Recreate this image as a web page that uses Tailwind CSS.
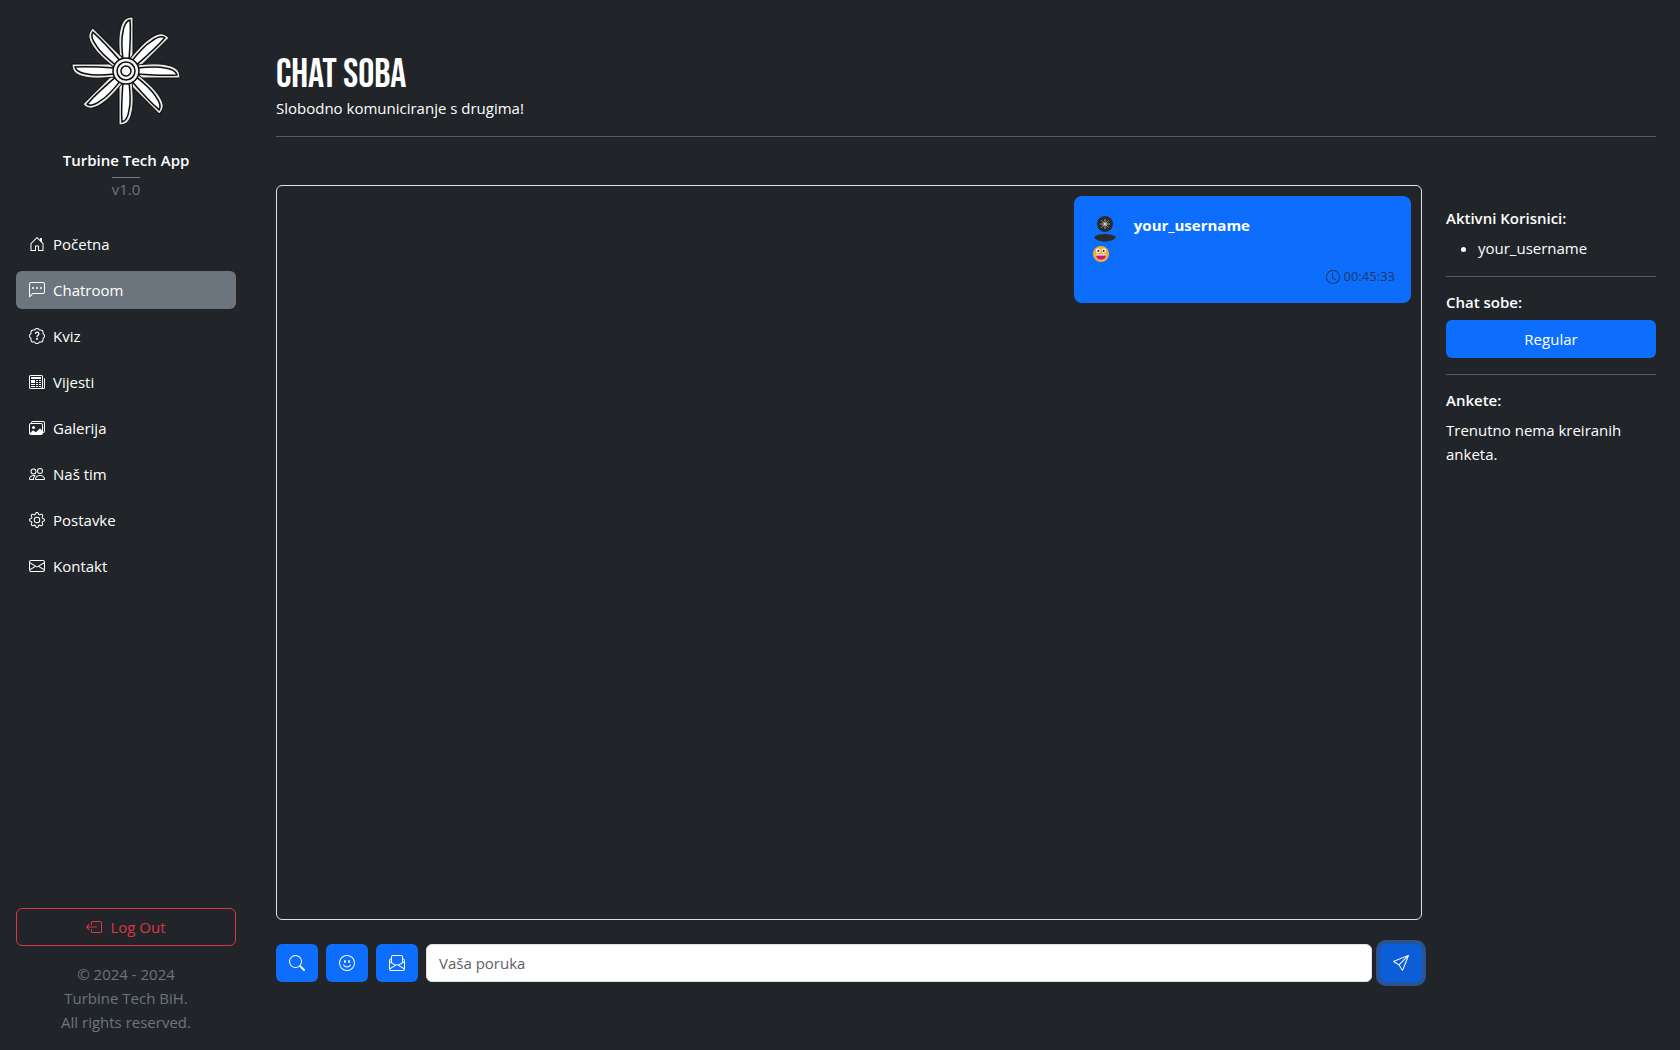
<!DOCTYPE html>
<html lang="bs">
<head>
    <meta charset="UTF-8">
    <meta name="viewport" content="width=device-width, initial-scale=1.0">
    <title>Turbine Tech App - Chat soba</title>
    <script src="https://cdn.jsdelivr.net/npm/@tailwindcss/browser@4"></script>
</head>
<body class="bg-[#212529] text-white text-[15px] leading-6 font-['Segoe_UI','Open_Sans',sans-serif]">

    <div class="flex min-h-screen">

        <!-- Bočni meni -->
        <aside class="flex flex-col w-[252px] shrink-0 p-4">
            <div class="flex flex-col items-center text-center">
                <svg class="w-[110px] h-[110px]" viewBox="-55 -55 110 110" role="img" aria-label="Turbine Tech">
                    <defs>
                        <g id="blade" stroke="#0b0c0d" stroke-linejoin="round">
                            <path fill="#e6e6e4" stroke-width="1" d="M-6-11C-7-20-8-32-6-41C-4-50-1-54 7-54V-11Z"/>
                            <path fill="#fff" stroke-width="1.5" d="M-3-11C-4-20-5-32-3-39C-2-46 0-50 4-51C5-38 4-24 3-11Z"/>
                        </g>
                    </defs>
                    <use href="#blade"/>
                    <use href="#blade" transform="rotate(45)"/>
                    <use href="#blade" transform="rotate(90)"/>
                    <use href="#blade" transform="rotate(135)"/>
                    <use href="#blade" transform="rotate(180)"/>
                    <use href="#blade" transform="rotate(225)"/>
                    <use href="#blade" transform="rotate(270)"/>
                    <use href="#blade" transform="rotate(315)"/>
                    <g fill="#f4f4f2" stroke="#0b0c0d" stroke-width="1.5">
                        <circle r="13"/>
                        <circle r="9"/>
                        <circle r="5"/>
                    </g>
                </svg>
                <strong class="mt-[22px] font-semibold">Turbine Tech App</strong>
                <hr class="w-7 mt-[5px] border-white/40">
                <span class="leading-[22px] text-[#6c757d]">v1.0</span>
            </div>

            <nav class="flex flex-col gap-2 mt-[25px]">
                <a href="#" class="flex items-center gap-2 h-[38px] px-[13px] rounded-md">
                    <svg class="size-4" fill="currentColor" viewBox="0 0 16 16"><path d="M8.354 1.146a.5.5 0 0 0-.708 0l-6 6A.5.5 0 0 0 1.5 7.5v7a.5.5 0 0 0 .5.5h4.5a.5.5 0 0 0 .5-.5v-4h2v4a.5.5 0 0 0 .5.5H14a.5.5 0 0 0 .5-.5v-7a.5.5 0 0 0-.146-.354L13 5.793V2.5a.5.5 0 0 0-.5-.5h-1a.5.5 0 0 0-.5.5v1.293zM2.5 14V7.707l5.5-5.5 5.5 5.5V14H10v-4a.5.5 0 0 0-.5-.5h-3a.5.5 0 0 0-.5.5v4z"/></svg>
                    Početna
                </a>
                <a href="#" class="flex items-center gap-2 h-[38px] px-[13px] rounded-md bg-[#6c757d]" aria-current="page">
                    <svg class="size-4" fill="currentColor" viewBox="0 0 16 16"><path d="M14 1a1 1 0 0 1 1 1v8a1 1 0 0 1-1 1H4.414A2 2 0 0 0 3 11.586l-2 2V2a1 1 0 0 1 1-1zM2 0a2 2 0 0 0-2 2v12.793a.5.5 0 0 0 .854.353l2.853-2.853A1 1 0 0 1 4.414 12H14a2 2 0 0 0 2-2V2a2 2 0 0 0-2-2z"/><path d="M5 6a1 1 0 1 1-2 0 1 1 0 0 1 2 0m4 0a1 1 0 1 1-2 0 1 1 0 0 1 2 0m4 0a1 1 0 1 1-2 0 1 1 0 0 1 2 0"/></svg>
                    Chatroom
                </a>
                <a href="#" class="flex items-center gap-2 h-[38px] px-[13px] rounded-md">
                    <svg class="size-4" fill="currentColor" viewBox="0 0 16 16"><path d="M8.05 9.6c.336 0 .504-.24.554-.627.04-.534.198-.815.847-1.26.673-.475 1.049-1.09 1.049-1.986 0-1.325-.92-2.227-2.262-2.227-1.02 0-1.792.492-2.1 1.29A1.7 1.7 0 0 0 6 5.48c0 .393.203.64.545.64.272 0 .455-.147.564-.51.158-.592.525-.915 1.074-.915.61 0 1.03.446 1.03 1.084 0 .563-.208.885-.822 1.325-.619.433-.926.914-.926 1.64v.111c0 .428.208.745.585.745"/><path d="m10.273 2.513-.921-.944.715-.698.622.637.89-.011a2.89 2.89 0 0 1 2.924 2.924l-.01.89.636.622a2.89 2.89 0 0 1 0 4.134l-.637.622.011.89a2.89 2.89 0 0 1-2.924 2.924l-.89-.01-.622.636a2.89 2.89 0 0 1-4.134 0l-.622-.637-.89.011a2.89 2.89 0 0 1-2.924-2.924l.01-.89-.636-.622a2.89 2.89 0 0 1 0-4.134l.637-.622-.011-.89a2.89 2.89 0 0 1 2.924-2.924l.89.01.622-.636a2.89 2.89 0 0 1 4.134 0l-.715.698a1.89 1.89 0 0 0-2.704 0l-.92.944-1.32-.016a1.89 1.89 0 0 0-1.911 1.912l.016 1.318-.944.921a1.89 1.89 0 0 0 0 2.704l.944.92-.016 1.32a1.89 1.89 0 0 0 1.912 1.911l1.318-.016.921.944a1.89 1.89 0 0 0 2.704 0l.92-.944 1.32.016a1.89 1.89 0 0 0 1.911-1.912l-.016-1.318.944-.921a1.89 1.89 0 0 0 0-2.704l-.944-.92.016-1.32a1.89 1.89 0 0 0-1.912-1.911z"/><path d="M7.001 11a1 1 0 1 1 2 0 1 1 0 0 1-2 0"/></svg>
                    Kviz
                </a>
                <a href="#" class="flex items-center gap-2 h-[38px] px-[13px] rounded-md">
                    <svg class="size-4" fill="currentColor" viewBox="0 0 16 16"><path d="M0 2.5A1.5 1.5 0 0 1 1.5 1h11A1.5 1.5 0 0 1 14 2.5v10.528c0 .3-.05.654-.238.972h.738a.5.5 0 0 0 .5-.5v-9a.5.5 0 0 1 1 0v9a1.5 1.5 0 0 1-1.5 1.5H1.497A1.497 1.497 0 0 1 0 13.5zM12 14c.37 0 .654-.211.853-.441.092-.106.147-.279.147-.531V2.5a.5.5 0 0 0-.5-.5h-11a.5.5 0 0 0-.5.5v11c0 .278.223.5.497.5z"/><path d="M2 3h10v2H2zm0 3h4v3H2zm0 4h4v1H2zm0 2h4v1H2zm5-6h2v1H7zm3 0h2v1h-2zM7 8h2v1H7zm3 0h2v1h-2zm-3 2h2v1H7zm3 0h2v1h-2zm-3 2h2v1H7zm3 0h2v1h-2z"/></svg>
                    Vijesti
                </a>
                <a href="#" class="flex items-center gap-2 h-[38px] px-[13px] rounded-md">
                    <svg class="size-4" fill="currentColor" viewBox="0 0 16 16"><path d="M4.502 9a1.5 1.5 0 1 0 0-3 1.5 1.5 0 0 0 0 3"/><path d="M14.002 13a2 2 0 0 1-2 2h-10a2 2 0 0 1-2-2V5A2 2 0 0 1 2 3a2 2 0 0 1 2-2h10a2 2 0 0 1 2 2v8a2 2 0 0 1-1.998 2M14 2H4a1 1 0 0 0-1 1h9.002a2 2 0 0 1 2 2v7A1 1 0 0 0 15 11V3a1 1 0 0 0-1-1M2.002 4a1 1 0 0 0-1 1v8l2.646-2.354a.5.5 0 0 1 .63-.062l2.66 1.773 3.71-3.71a.5.5 0 0 1 .577-.094l1.777 1.947V5a1 1 0 0 0-1-1z"/></svg>
                    Galerija
                </a>
                <a href="#" class="flex items-center gap-2 h-[38px] px-[13px] rounded-md">
                    <svg class="size-4" fill="currentColor" viewBox="0 0 16 16"><path d="M15 14s1 0 1-1-1-4-5-4-5 3-5 4 1 1 1 1zm-7.978-1L7 12.996c.001-.264.167-1.03.76-1.72C8.312 10.629 9.282 10 11 10c1.717 0 2.687.63 3.24 1.276.593.69.758 1.457.76 1.72l-.008.002-.014.002zM11 7a2 2 0 1 0 0-4 2 2 0 0 0 0 4m3-2a3 3 0 1 1-6 0 3 3 0 0 1 6 0M6.936 9.28a6 6 0 0 0-1.23-.247A7 7 0 0 0 5 9c-4 0-5 3-5 4q0 1 1 1h4.216A2.24 2.24 0 0 1 5 13c0-1.01.377-2.042 1.09-2.904.243-.294.526-.569.846-.816M4.92 10A5.5 5.5 0 0 0 4 13H1c0-.26.164-1.03.76-1.724.545-.636 1.492-1.256 3.16-1.275ZM1.5 5.5a3 3 0 1 1 6 0 3 3 0 0 1-6 0m3-2a2 2 0 1 0 0 4 2 2 0 0 0 0-4"/></svg>
                    Naš tim
                </a>
                <a href="#" class="flex items-center gap-2 h-[38px] px-[13px] rounded-md">
                    <svg class="size-4" fill="currentColor" viewBox="0 0 16 16"><path d="M8 4.754a3.246 3.246 0 1 0 0 6.492 3.246 3.246 0 0 0 0-6.492M5.754 8a2.246 2.246 0 1 1 4.492 0 2.246 2.246 0 0 1-4.492 0"/><path d="M9.796 1.343c-.527-1.79-3.065-1.79-3.592 0l-.094.319a.873.873 0 0 1-1.255.52l-.292-.16c-1.64-.892-3.433.902-2.54 2.541l.159.292a.873.873 0 0 1-.52 1.255l-.319.094c-1.79.527-1.79 3.065 0 3.592l.319.094a.873.873 0 0 1 .52 1.255l-.16.292c-.892 1.64.901 3.434 2.541 2.54l.292-.159a.873.873 0 0 1 1.255.52l.094.319c.527 1.79 3.065 1.79 3.592 0l.094-.319a.873.873 0 0 1 1.255-.52l.292.16c1.64.893 3.434-.902 2.54-2.541l-.159-.292a.873.873 0 0 1 .52-1.255l.319-.094c1.79-.527 1.79-3.065 0-3.592l-.319-.094a.873.873 0 0 1-.52-1.255l.16-.292c.893-1.64-.902-3.433-2.541-2.54l-.292.159a.873.873 0 0 1-1.255-.52zm-2.633.283c.246-.835 1.428-.835 1.674 0l.094.319a1.873 1.873 0 0 0 2.693 1.115l.291-.16c.764-.415 1.6.42 1.184 1.185l-.159.292a1.873 1.873 0 0 0 1.116 2.692l.318.094c.835.246.835 1.428 0 1.674l-.319.094a1.873 1.873 0 0 0-1.115 2.693l.16.291c.415.764-.42 1.6-1.185 1.184l-.291-.159a1.873 1.873 0 0 0-2.693 1.116l-.094.318c-.246.835-1.428.835-1.674 0l-.094-.319a1.873 1.873 0 0 0-2.692-1.115l-.292.16c-.764.415-1.6-.42-1.184-1.185l.159-.291A1.873 1.873 0 0 0 1.945 8.93l-.319-.094c-.835-.246-.835-1.428 0-1.674l.319-.094A1.873 1.873 0 0 0 3.06 4.377l-.16-.292c-.415-.764.42-1.6 1.185-1.184l.292.159a1.873 1.873 0 0 0 2.692-1.115z"/></svg>
                    Postavke
                </a>
                <a href="#" class="flex items-center gap-2 h-[38px] px-[13px] rounded-md">
                    <svg class="size-4" fill="currentColor" viewBox="0 0 16 16"><path d="M0 4a2 2 0 0 1 2-2h12a2 2 0 0 1 2 2v8a2 2 0 0 1-2 2H2a2 2 0 0 1-2-2zm2-1a1 1 0 0 0-1 1v.217l7 4.2 7-4.2V4a1 1 0 0 0-1-1zm13 2.383-4.708 2.825L15 11.105zm-.034 6.876-5.64-3.471L8 9.583l-1.326-.795-5.64 3.47A1 1 0 0 0 2 13h12a1 1 0 0 0 .966-.741M1 11.105l4.708-2.897L1 5.383z"/></svg>
                    Kontakt
                </a>
            </nav>

            <div class="mt-auto">
                <button type="button" class="flex items-center justify-center gap-2 w-full h-[38px] rounded-md border border-[#dc3545] text-[#dc3545]">
                    <svg class="size-4" fill="currentColor" viewBox="0 0 16 16"><path d="M6 12.5a.5.5 0 0 0 .5.5h8a.5.5 0 0 0 .5-.5v-9a.5.5 0 0 0-.5-.5h-8a.5.5 0 0 0-.5.5v2a.5.5 0 0 1-1 0v-2A1.5 1.5 0 0 1 6.5 2h8A1.5 1.5 0 0 1 16 3.5v9a1.5 1.5 0 0 1-1.5 1.5h-8A1.5 1.5 0 0 1 5 12.5v-2a.5.5 0 0 1 1 0z"/><path d="M.146 8.354a.5.5 0 0 1 0-.708l3-3a.5.5 0 1 1 .708.708L1.707 7.5H10.5a.5.5 0 0 1 0 1H1.707l2.147 2.146a.5.5 0 0 1-.708.708z"/></svg>
                    Log Out
                </button>
                <p class="mt-4 text-center text-[#6c757d]">
                    © 2024 - 2024<br>
                    Turbine Tech BiH.<br>
                    All rights reserved.
                </p>
            </div>
        </aside>

        <!-- Glavni sadržaj -->
        <main class="flex-1 min-w-0 px-6 pt-[54px]">
            <header>
                <h1 class="text-[40px] leading-[42px] font-normal font-['Bebas_Neue','Roboto_Condensed','Liberation_Sans_Narrow',sans-serif]">CHAT SOBA</h1>
                <p>Slobodno komuniciranje s drugima!</p>
            </header>
            <hr class="mt-4 border-white/25">

            <div class="grid grid-cols-12 gap-6 mt-12">
                <section class="col-span-10">
                    <!-- Poruke -->
                    <div class="h-[70vh] overflow-y-auto rounded-md border border-[#dee2e6] p-[10px]">
                        <article class="w-[30%] ml-auto min-w-[337px] rounded-lg bg-[#0d6efd] p-4">
                            <div class="flex gap-4">
                                <svg class="w-7 h-[30px]" viewBox="0 0 28 30" role="img" aria-label="Avatar">
                                    <circle cx="15" cy="12" r="8" fill="#2b2b2d"/>
                                    <path d="M15 7v10M10 12h10M11.5 8.5l7 7M18.5 8.5l-7 7" stroke="#a5a5a5" stroke-width="1"/>
                                    <circle cx="15" cy="12" r="1.5" fill="#d0d0d0"/>
                                    <path d="M4 25c4-4 18-4 22 0c-3 6-19 6-22 0Z" fill="#2b2b2d"/>
                                </svg>
                                <strong class="font-bold leading-[26px]">your_username</strong>
                            </div>
                            <div class="flex items-center h-6 px-[3px]">
                                <svg class="size-4" viewBox="0 0 16 16" role="img" aria-label="Nasmijano lice">
                                    <circle cx="8" cy="8" r="8" fill="#fbab2c"/>
                                    <circle cx="5.2" cy="4.8" r="2.3" fill="#fff"/>
                                    <circle cx="10.8" cy="4.8" r="2.3" fill="#fff"/>
                                    <circle cx="5.4" cy="4.9" r="1.1" fill="#333"/>
                                    <circle cx="10.6" cy="4.9" r="1.1" fill="#333"/>
                                    <path d="M3 8.5h10c0 3-2 5-5 5s-5-2-5-5Z" fill="#bb1d80"/>
                                    <path d="M3 8.2h10v1.3H3Z" fill="#fff"/>
                                </svg>
                            </div>
                            <div class="flex items-center justify-end gap-1 text-[13px] leading-[21px] text-[#212529]/75">
                                <svg class="size-[14px]" fill="currentColor" viewBox="0 0 16 16"><path d="M8 3.5a.5.5 0 0 0-1 0V9a.5.5 0 0 0 .252.434l3.5 2a.5.5 0 0 0 .496-.868L8 8.71z"/><path d="M8 16A8 8 0 1 0 8 0a8 8 0 0 0 0 16m7-8A7 7 0 1 1 1 8a7 7 0 0 1 14 0"/></svg>
                                <time>00:45:33</time>
                            </div>
                        </article>
                    </div>

                    <!-- Unos poruke -->
                    <form class="flex gap-2 mt-6">
                        <button type="button" aria-label="Pretraga" class="flex items-center justify-center w-[42px] h-[38px] rounded-md bg-[#0d6efd]">
                            <svg class="size-4" fill="currentColor" viewBox="0 0 16 16"><path d="M11.742 10.344a6.5 6.5 0 1 0-1.397 1.398h-.001q.044.06.098.115l3.85 3.85a1 1 0 0 0 1.415-1.414l-3.85-3.85a1 1 0 0 0-.115-.1zM12 6.5a5.5 5.5 0 1 1-11 0 5.5 5.5 0 0 1 11 0"/></svg>
                        </button>
                        <button type="button" aria-label="Emoji" class="flex items-center justify-center w-[42px] h-[38px] rounded-md bg-[#0d6efd]">
                            <svg class="size-4" fill="currentColor" viewBox="0 0 16 16"><path d="M8 15A7 7 0 1 1 8 1a7 7 0 0 1 0 14m0 1A8 8 0 1 0 8 0a8 8 0 0 0 0 16"/><path d="M4.285 9.567a.5.5 0 0 1 .683.183A3.5 3.5 0 0 0 8 11.5a3.5 3.5 0 0 0 3.032-1.75.5.5 0 1 1 .866.5A4.5 4.5 0 0 1 8 12.5a4.5 4.5 0 0 1-3.898-2.25.5.5 0 0 1 .183-.683M7 6.5C7 7.328 6.552 8 6 8s-1-.672-1-1.5S5.448 5 6 5s1 .672 1 1.5m4 0c0 .828-.448 1.5-1 1.5s-1-.672-1-1.5S9.448 5 10 5s1 .672 1 1.5"/></svg>
                        </button>
                        <button type="button" aria-label="Anketa" class="flex items-center justify-center w-[42px] h-[38px] rounded-md bg-[#0d6efd]">
                            <svg class="size-4" fill="currentColor" viewBox="0 0 16 16"><path d="M4 0a2 2 0 0 0-2 2v1.133l-.941.502A2 2 0 0 0 0 5.4V14a2 2 0 0 0 2 2h12a2 2 0 0 0 2-2V5.4a2 2 0 0 0-1.059-1.765L14 3.133V2a2 2 0 0 0-2-2zm10 4.267.47.25A1 1 0 0 1 15 5.4v.817l-1 .6zm-1 3.15-3.75 2.25L8 8.917l-1.25.75L3 7.417V2a1 1 0 0 1 1-1h8a1 1 0 0 1 1 1zm-11-.6-1-.6V5.4a1 1 0 0 1 .53-.882L2 4.267zm13 .566v5.734l-4.778-2.867zm-.035 6.88A1 1 0 0 1 14 15H2a1 1 0 0 1-.965-.738L8 10.083zM1 13.116V7.383l4.778 2.867L1 13.117Z"/></svg>
                        </button>
                        <input type="text" aria-label="Vaša poruka" placeholder="Vaša poruka" class="flex-1 min-w-0 h-[38px] px-3 rounded-md border border-[#dee2e6] bg-white text-[#212529] placeholder:text-[#5d6167]">
                        <button type="submit" aria-label="Pošalji" class="flex items-center justify-center w-[42px] h-[38px] rounded-md bg-[#0b5ed7] ring-4 ring-[#3184fd]/50">
                            <svg class="size-4" fill="currentColor" viewBox="0 0 16 16"><path d="M15.854.146a.5.5 0 0 1 .11.54l-5.819 14.547a.75.75 0 0 1-1.329.124l-3.178-4.995L.643 7.184a.75.75 0 0 1 .124-1.33L15.314.037a.5.5 0 0 1 .54.11ZM6.636 10.07l2.761 4.338L14.13 2.576zm6.787-8.201L1.591 6.602l4.339 2.76z"/></svg>
                        </button>
                    </form>
                </section>

                <!-- Desna kolona -->
                <aside class="col-span-2 pt-6">
                    <h2 class="mb-2 leading-[19px] font-semibold">Aktivni Korisnici:</h2>
                    <ul class="pl-8 list-disc">
                        <li>your_username</li>
                    </ul>
                    <hr class="my-4 border-white/25">
                    <h2 class="mb-2 leading-[19px] font-semibold">Chat sobe:</h2>
                    <button type="button" class="block w-full h-[38px] rounded-md bg-[#0d6efd]">Regular</button>
                    <hr class="my-4 border-white/25">
                    <h2 class="mb-2 leading-[19px] font-semibold">Ankete:</h2>
                    <p>Trenutno nema kreiranih anketa.</p>
                </aside>
            </div>
        </main>
    </div>

</body>
</html>
